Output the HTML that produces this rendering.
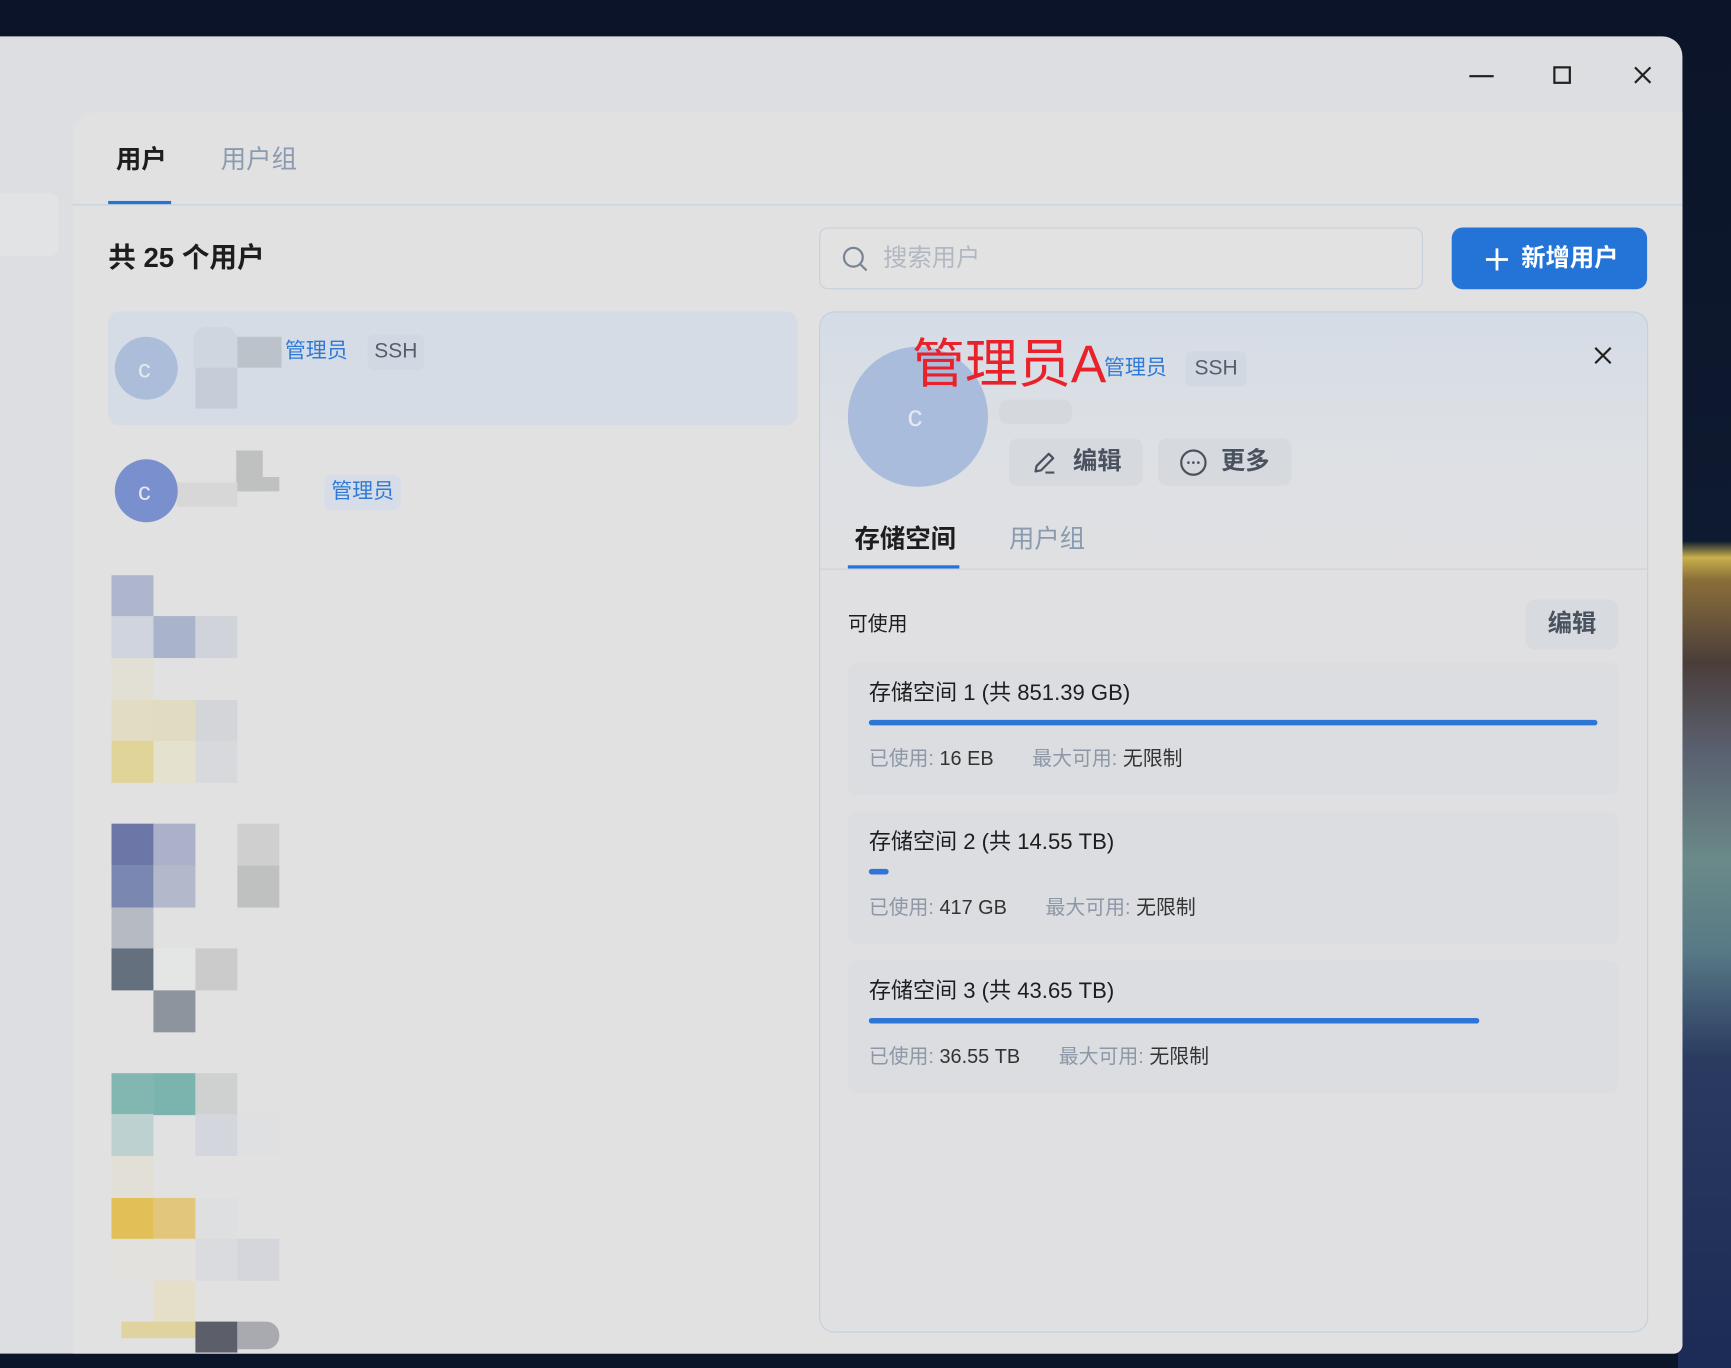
<!DOCTYPE html>
<html><head><meta charset="utf-8"><style>
*{margin:0;padding:0;box-sizing:border-box}
html,body{width:1731px;height:1368px;overflow:hidden;background:#0b1428}
body{font-family:"Liberation Sans","Noto Sans CJK SC",sans-serif;}
#s{position:absolute;left:0;top:0;width:1568px;height:1239px;transform:scale(1.10396,1.1041);transform-origin:0 0;background:#0b1428}
.a{position:absolute}
.bg{left:1520px;top:0;width:48px;height:1239px;background:linear-gradient(180deg,#0b1428 0,#0e1a30 490px,#c9b04a 505px,#8a6e3a 525px,#4a3e3a 600px,#5a6070 680px,#6a8a88 780px,#587a86 860px,#2a3a60 960px,#1b2b55 1239px)}
.win{left:-20px;top:33px;width:1544px;height:1193px;background:#dcdee1;border-radius:18px 18px 8px 8px}
.inner{left:66px;top:102px;width:1458px;height:1124px;background:#e1e1e2;border-top-left-radius:18px;border-bottom-right-radius:8px}
.t{position:absolute;white-space:nowrap;line-height:1}
.blk{position:absolute;width:38px;height:38px}
.tag{position:absolute;border-radius:6px;padding:0 6px;height:32px;line-height:32px;font-size:19px}
.card{position:absolute;left:768px;width:698px;height:120px;background:#dbdde1;border-radius:8px}
.bar{position:absolute;left:19px;top:52px;height:5px;background:#2f75d6;border-radius:3px}
.lab{color:#8d97a6}
.val{color:#333}
</style></head><body><div id="s">
<div class="a bg"></div>
<div class="a win"></div>
<div class="a" style="left:0;top:175px;width:53px;height:57px;background:#e2e3e5;border-radius:0 8px 8px 0"></div>
<div class="a inner"></div>
<div class="a" style="left:1331px;top:68px;width:22px;height:2px;background:#222"></div>
<div class="a" style="left:1407px;top:60px;width:16px;height:16px;border:2px solid #222"></div>
<svg class="a" style="left:1479px;top:59px" width="18" height="18" viewBox="0 0 18 18"><path d="M2 2L16 16M16 2L2 16" stroke="#222" stroke-width="2"/></svg>
<div class="t" style="left:105px;top:133px;font-size:23px;font-weight:bold;color:#1d1d1f">用户</div>
<div class="t" style="left:200px;top:133px;font-size:23px;color:#8a9ab0">用户组</div>
<div class="a" style="left:98px;top:182px;width:57px;height:3px;background:#2474d8"></div>
<div class="a" style="left:66px;top:185px;width:1458px;height:1px;background:#c6d1dd"></div>
<div class="t" style="left:98px;top:222px;font-size:25px;font-weight:bold;color:#1d1d1f">共 25 个用户</div>
<div class="a" style="left:742px;top:206px;width:547px;height:56px;border:1px solid #c6cfdb;border-radius:8px;background:#e2e2e3"></div>
<svg class="a" style="left:762px;top:222px" width="26" height="26" viewBox="0 0 26 26"><circle cx="11" cy="11" r="8.5" fill="none" stroke="#7a8594" stroke-width="2"/><path d="M17.5 17.5L23 23" stroke="#7a8594" stroke-width="2"/></svg>
<div class="t" style="left:800px;top:223px;font-size:22px;color:#b2b8c2">搜索用户</div>
<div class="a" style="left:1315px;top:206px;width:177px;height:56px;background:#2474d8;border-radius:10px"></div>
<svg class="a" style="left:1344px;top:223px" width="24" height="24" viewBox="0 0 24 24"><path d="M12 2V22M2 12H22" stroke="#fff" stroke-width="2.5"/></svg>
<div class="t" style="left:1378px;top:223px;font-size:22px;font-weight:bold;color:#fff">新增用户</div>
<div class="a" style="left:98px;top:282px;width:624px;height:103px;background:#d5dce6;border-radius:10px"></div>
<div class="a" style="left:104px;top:305px;width:57px;height:57px;border-radius:50%;background:#abbdd9"></div>
<div class="t" style="left:125px;top:323px;font-size:23px;color:#e4e8f0">c</div>
<div class="blk" style="left:175px;top:296px;height:38px;width:40px;background:#cfd6e0;border-radius:12px 12px 0 0"></div>
<div class="blk" style="left:215px;top:305px;width:40px;height:28px;background:#bcc2ca"></div>
<div class="blk" style="left:177px;top:333px;height:37px;background:#c6ccd8"></div>
<div class="blk" style="left:214px;top:408px;height:37px;background:#bfc0c0;width:24px"></div>
<div class="blk" style="left:215px;top:432px;height:13px;background:#bfc0c0"></div>
<div class="blk" style="left:160px;top:437px;width:55px;height:22px;background:#d7d7d8"></div>
<div class="tag" style="left:252px;top:303px;color:#2f7ad9">管理员</div>
<div class="tag" style="left:333px;top:303px;color:#555e6b;background:#d2d8e1">SSH</div>
<div class="a" style="left:104px;top:416px;width:57px;height:57px;border-radius:50%;background:#7a8fcd"></div>
<div class="t" style="left:125px;top:434px;font-size:23px;color:#e4e8f0">c</div>
<div class="tag" style="left:294px;top:430px;color:#2f7ad9;background:#d6dde8">管理员</div>
<div class="blk" style="left:101px;top:521px;background:#adb6cc"></div>
<div class="blk" style="left:101px;top:558px;background:#d0d4de"></div><div class="blk" style="left:139px;top:558px;background:#a9b4cb"></div><div class="blk" style="left:177px;top:558px;background:#d0d3da"></div>
<div class="blk" style="left:101px;top:596px;background:#e2e0d4"></div>
<div class="blk" style="left:101px;top:634px;background:#e1dcc2"></div><div class="blk" style="left:139px;top:634px;background:#e1dbc2"></div><div class="blk" style="left:177px;top:634px;background:#d4d5d8"></div>
<div class="blk" style="left:101px;top:671px;background:#e0d499"></div><div class="blk" style="left:139px;top:671px;background:#e4e1cf"></div><div class="blk" style="left:177px;top:671px;background:#d8d9dc"></div>
<div class="blk" style="left:101px;top:746px;background:#6c77a8"></div><div class="blk" style="left:139px;top:746px;background:#aab1c8"></div><div class="blk" style="left:215px;top:746px;background:#cfcfcf"></div>
<div class="blk" style="left:101px;top:784px;background:#7a87b0"></div><div class="blk" style="left:139px;top:784px;background:#b3b8cb"></div><div class="blk" style="left:215px;top:784px;background:#bfc0c0"></div>
<div class="blk" style="left:101px;top:822px;background:#b6bac3"></div>
<div class="blk" style="left:101px;top:859px;background:#65707f"></div><div class="blk" style="left:139px;top:859px;background:#e4e5e5"></div><div class="blk" style="left:177px;top:859px;background:#cbcbcc"></div>
<div class="blk" style="left:139px;top:897px;background:#8e949e"></div>
<div class="blk" style="left:101px;top:972px;background:#82b6b0"></div><div class="blk" style="left:139px;top:972px;background:#7bb3ae"></div><div class="blk" style="left:177px;top:972px;background:#cfd0d0"></div>
<div class="blk" style="left:101px;top:1009px;background:#bdd1d1"></div><div class="blk" style="left:177px;top:1009px;background:#d3d6dc"></div><div class="blk" style="left:215px;top:1009px;background:#dfe0e2"></div>
<div class="blk" style="left:101px;top:1047px;background:#e1dfd6"></div>
<div class="blk" style="left:101px;top:1085px;background:#e2bf57"></div><div class="blk" style="left:139px;top:1085px;background:#e2c67c"></div><div class="blk" style="left:177px;top:1085px;background:#dedfe1"></div>
<div class="blk" style="left:101px;top:1122px;background:#e2e1dd"></div><div class="blk" style="left:139px;top:1122px;background:#e2e1dd"></div><div class="blk" style="left:177px;top:1122px;background:#dadbdf"></div><div class="blk" style="left:215px;top:1122px;background:#d5d6db"></div>
<div class="blk" style="left:139px;top:1160px;background:#e5dfca"></div>
<div class="blk" style="left:110px;top:1197px;width:67px;height:15px;background:#e1d3a0"></div><div class="blk" style="left:177px;top:1197px;height:28px;background:#5c5f6a"></div><div class="blk" style="left:215px;top:1197px;height:25px;background:#a9aab0;border-radius:0 12px 12px 0"></div>
<div class="a" style="left:742px;top:282px;width:751px;height:925px;border:1px solid #bdd0e3;border-radius:14px;background:linear-gradient(180deg,#d5dce6 0,#dde0e4 120px,#e0e0e2 240px)"></div>
<div class="a" style="left:768px;top:314px;width:127px;height:127px;border-radius:50%;background:#aabcdb"></div>
<div class="t" style="left:822px;top:364px;font-size:27px;color:#e4e8f0">c</div>
<div class="a" style="left:905px;top:362px;width:66px;height:22px;border-radius:8px;background:#d5d8dd"></div>
<div class="t" style="left:826px;top:307px;font-size:48px;color:#e8212a">管理员A</div>
<div class="tag" style="left:994px;top:318px;color:#2f7ad9">管理员</div>
<div class="tag" style="left:1074px;top:318px;color:#555e6b;background:#d2d8e1;padding:0 8px">SSH</div>
<svg class="a" style="left:1443px;top:313px" width="18" height="18" viewBox="0 0 18 18"><path d="M2 2L16 16M16 2L2 16" stroke="#222" stroke-width="2"/></svg>
<div class="a" style="left:914px;top:397px;width:121px;height:43px;border-radius:8px;background:#d6d9de"></div>
<svg class="a" style="left:934px;top:407px" width="24" height="24" viewBox="0 0 24 24"><path d="M4 20L5 15L16 4L20 8L9 19Z" fill="none" stroke="#4a5260" stroke-width="2" stroke-linejoin="round"/><path d="M13 21H21" stroke="#4a5260" stroke-width="2"/></svg>
<div class="t" style="left:972px;top:407px;font-size:22px;font-weight:bold;color:#4a5260">编辑</div>
<div class="a" style="left:1049px;top:397px;width:121px;height:43px;border-radius:8px;background:#d6d9de"></div>
<svg class="a" style="left:1068px;top:406px" width="26" height="26" viewBox="0 0 26 26"><circle cx="13" cy="13" r="11" fill="none" stroke="#4a5260" stroke-width="2"/><circle cx="8.5" cy="13" r="1.2" fill="#4a5260"/><circle cx="13" cy="13" r="1.2" fill="#4a5260"/><circle cx="17.5" cy="13" r="1.2" fill="#4a5260"/></svg>
<div class="t" style="left:1106px;top:407px;font-size:22px;font-weight:bold;color:#4a5260">更多</div>
<div class="t" style="left:774px;top:477px;font-size:23px;font-weight:bold;color:#1d1d1f">存储空间</div>
<div class="t" style="left:914px;top:477px;font-size:23px;color:#8a9ab0">用户组</div>
<div class="a" style="left:768px;top:512px;width:101px;height:3px;background:#2474d8"></div>
<div class="a" style="left:743px;top:515px;width:749px;height:1px;background:#c6d1dd"></div>
<div class="t" style="left:768px;top:556px;font-size:18px;color:#1d1d1f">可使用</div>
<div class="a" style="left:1382px;top:543px;width:84px;height:45px;border-radius:8px;background:#d7dadf"></div>
<div class="t" style="left:1402px;top:554px;font-size:22px;font-weight:bold;color:#4a5260">编辑</div>
<div class="card" style="top:600px"><div class="t" style="left:19px;top:18px;font-size:20px;color:#1d1d1f">存储空间 1 (共 851.39 GB)</div><div class="bar" style="width:660px"></div><div class="t" style="left:19px;top:78px;font-size:18px"><span class="lab">已使用:</span> <span class="val">16 EB</span>&nbsp;&nbsp;&nbsp;&nbsp;&nbsp;&nbsp;&nbsp;<span class="lab">最大可用:</span> <span class="val">无限制</span></div></div>
<div class="card" style="top:735px"><div class="t" style="left:19px;top:18px;font-size:20px;color:#1d1d1f">存储空间 2 (共 14.55 TB)</div><div class="bar" style="width:18px"></div><div class="t" style="left:19px;top:78px;font-size:18px"><span class="lab">已使用:</span> <span class="val">417 GB</span>&nbsp;&nbsp;&nbsp;&nbsp;&nbsp;&nbsp;&nbsp;<span class="lab">最大可用:</span> <span class="val">无限制</span></div></div>
<div class="card" style="top:870px"><div class="t" style="left:19px;top:18px;font-size:20px;color:#1d1d1f">存储空间 3 (共 43.65 TB)</div><div class="bar" style="width:553px"></div><div class="t" style="left:19px;top:78px;font-size:18px"><span class="lab">已使用:</span> <span class="val">36.55 TB</span>&nbsp;&nbsp;&nbsp;&nbsp;&nbsp;&nbsp;&nbsp;<span class="lab">最大可用:</span> <span class="val">无限制</span></div></div>
</div></body></html>
